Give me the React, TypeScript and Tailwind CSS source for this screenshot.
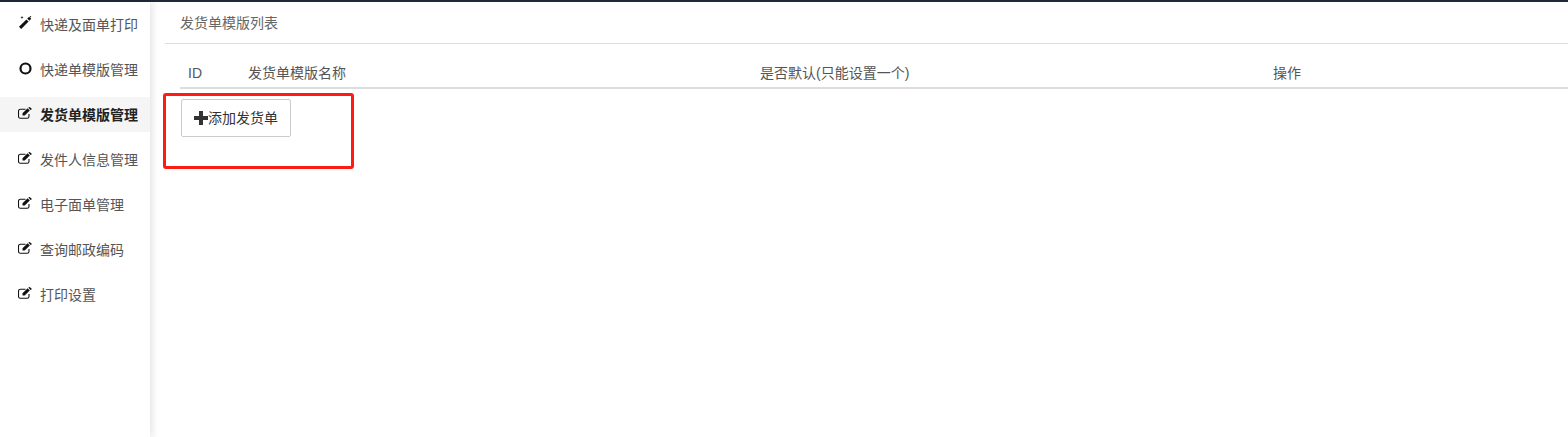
import React from 'react';

const navItems = [
  { label: '快递及面单打印', icon: 'magic' },
  { label: '快递单模版管理', icon: 'circle' },
  { label: '发货单模版管理', icon: 'edit', active: true },
  { label: '发件人信息管理', icon: 'edit' },
  { label: '电子面单管理', icon: 'edit' },
  { label: '查询邮政编码', icon: 'edit' },
  { label: '打印设置', icon: 'edit' },
];

const NavIcon = ({ name }: { name: string }) => {
  if (name === 'magic') {
    return (
      <svg viewBox="0 0 13 13" className="w-[13px] h-[13px] text-[#111] -mt-[5px]">
        <path d="M0 10.800 L7.400 3.400 L9.600 5.600 L2.200 13 Z" fill="currentColor" />
        <path d="M8.200 2.600 L10.200 0.800 L12.200 2.800 L10.400 4.800 Z" fill="currentColor" />
        <path d="M3 0.300v2.400M1.800 1.500h2.400" stroke="currentColor" strokeWidth="0.700" fill="none" />
        <path d="M11.500 0v1.400M10.800 0.700h1.400" stroke="currentColor" strokeWidth="0.600" fill="none" />
      </svg>
    );
  }
  if (name === 'circle') {
    return (
      <svg viewBox="0 0 13 13" className="w-[13px] h-[13px] text-[#111] -mt-[3px]">
        <circle cx="6.500" cy="6.500" r="5" fill="none" stroke="currentColor" strokeWidth="2.200" />
      </svg>
    );
  }
  return (
    <svg viewBox="0 0 14 12" className="w-3.5 h-3 text-[#111] -mt-[4px] -ml-px">
      <path d="M11 7v2.400a1.900 1.900 0 0 1-1.900 1.900H2.400A1.900 1.900 0 0 1 0.500 9.400V4.200A1.900 1.900 0 0 1 2.400 2.300H7.500" fill="none" stroke="currentColor" strokeWidth="1.100" />
      <path d="M4.500 6.300 L9.600 1.200 L11.800 3.400 L6.700 8.500 L4.500 8.500 Z" fill="currentColor" />
      <path d="M10.300 0.600 L10.900 0.200 Q11.400 -0.100 11.900 0.300 L13.500 1.400 Q13.900 1.900 13.500 2.400 L12.500 2.900 Z" fill="currentColor" />
    </svg>
  );
};

export default function App() {
  return (
    <div className="h-[437px] w-[1568px] overflow-hidden bg-white text-sm text-[#555] relative font-['Liberation_Sans','Noto_Sans_CJK_SC',sans-serif]">
      <div className="h-0.5 bg-[#1f2a3a]" />
      <div className="flex h-[435px]">
        <aside className="w-[150px] shrink-0 pt-[5px] flex flex-col gap-2.5 shadow-[2px_0_8px_rgba(0,0,0,0.12)]">
          {navItems.map((item) => (
            <div
              key={item.label}
              className={`h-[35px] shrink-0 flex items-center pl-[19px] ${item.active ? 'bg-[#f5f5f5] font-bold text-[#222]' : ''}`}
            >
              <span className="w-[21px] shrink-0 flex items-center">
                <NavIcon name={item.icon} />
              </span>
              <span>{item.label}</span>
            </div>
          ))}
        </aside>

        <main className="flex-1 pl-[15px]">
          <div className="h-[42px] border-b border-[#ddd] pl-[15px] flex items-center">
            <span className="text-[#666]">发货单模版列表</span>
          </div>
          <div className="ml-[15px] mt-[14px] h-[31px] flex items-center border-b-2 border-[#ddd] text-[#555]">
            <div className="w-[68px] pl-2">ID</div>
            <div className="w-[512px]">发货单模版名称</div>
            <div className="w-[513px]">是否默认(只能设置一个)</div>
            <div>操作</div>
          </div>
          <button className="ml-4 mt-2.5 w-[110px] h-[38px] rounded-[2px] border border-[#ccc] bg-white flex items-center pl-3 text-[#333]">
            <svg viewBox="0 0 14 14" className="w-3.5 h-3.5 text-[#333]">
              <path d="M5 0h4v5h5v4H9v5H5V9H0V5h5z" fill="currentColor" />
            </svg>
            <span>添加发货单</span>
          </button>
        </main>
      </div>

      <div className="absolute left-[163px] top-[93px] w-[191px] h-[76px] border-[3px] border-[#ff1a12] rounded-[3px]" />
    </div>
  );
}
